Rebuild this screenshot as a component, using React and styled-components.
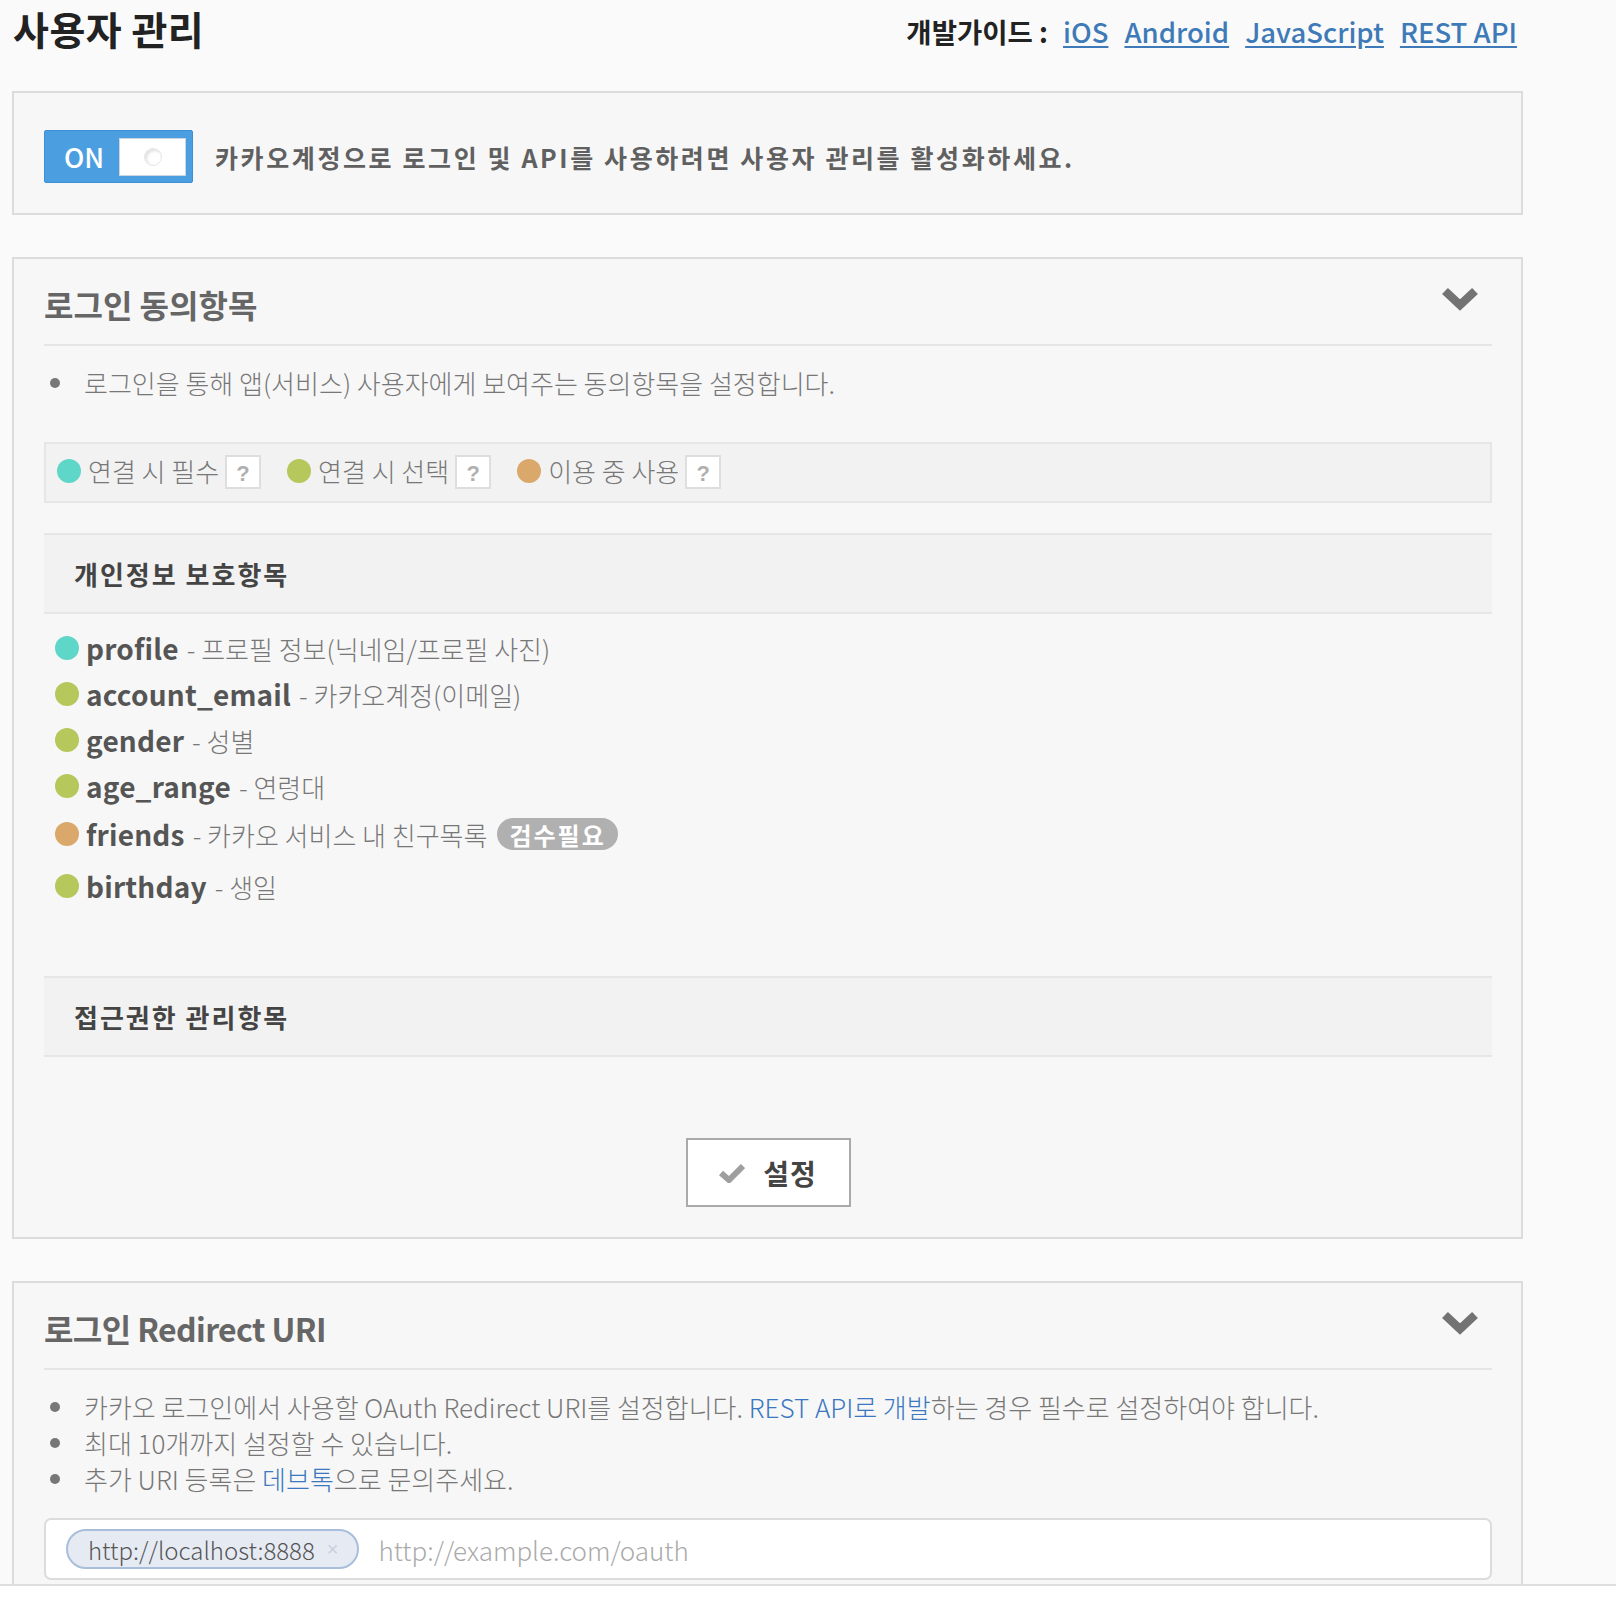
import React from 'react';
import styled, { createGlobalStyle } from 'styled-components';

const FONT = `"Noto Sans CJK KR", "Noto Sans", sans-serif`;

const GlobalStyle = createGlobalStyle`
  html, body { margin: 0; padding: 0; background: #fff; }
  body { font-family: ${FONT}; }
  * { box-sizing: border-box; }
`;

const Page = styled.div`
  height: 1586px;
  background: #fafafa;
  border-bottom: 2px solid #dedede;
  overflow: hidden;
  padding: 0 93px 0 12px;
`;

const Header = styled.header`
  display: flex;
  justify-content: space-between;
  align-items: flex-start;
  height: 91px;
  padding: 3px 6px 0 0;
`;

const Title = styled.h1`
  margin: 0;
  padding-left: 1px;
  font-size: 39px;
  font-weight: 700;
  line-height: 50px;
  color: #222;
  letter-spacing: 0.5px;
`;

const Guide = styled.div`
  margin-top: 7px;
  display: flex;
  align-items: baseline;
  gap: 16px;
  line-height: 42px;
`;

const GuideLabel = styled.span`
  font-size: 27.5px;
  font-weight: 700;
  color: #222;
  margin-right: -1px;
`;

const GuideLink = styled.a`
  font-size: 27.5px;
  font-weight: 500;
  color: #3f7ab8;
  text-decoration: underline;
  text-underline-offset: 3px;
`;

const Panel = styled.section`
  background: #f7f7f7;
  border: 2px solid #dcdcdc;
  margin-bottom: 42px;
  padding: ${(p) => p.$pad || '0 29px 30px 30px'};
  ${(p) => p.$flex && 'display: flex; align-items: center; gap: 22px;'}
`;

const Toggle = styled.div`
  width: 149px;
  height: 53px;
  flex: none;
  display: flex;
  align-items: center;
  justify-content: space-between;
  padding: 0 6px 0 19px;
  background: #4b9fe1;
  border: 1px solid #3f8fd6;
  border-radius: 2px;
`;

const ToggleLabel = styled.span`
  font-size: 27px;
  font-weight: 500;
  color: #fff;
  line-height: 1;
`;

const Knob = styled.div`
  width: 67px;
  height: 38px;
  background: #fff;
  border: 1px solid #c9d6e2;
  display: flex;
  align-items: center;
  justify-content: center;
`;

const KnobDot = styled.div`
  width: 18px;
  height: 18px;
  border-radius: 50%;
  border: 1px solid #e6e6e6;
  box-shadow: inset 2px 2px 3px rgba(0, 0, 0, 0.12);
`;

const ActivateText = styled.p`
  margin: 0;
  font-size: 25px;
  font-weight: 700;
  color: #606060;
  letter-spacing: 2.6px;
`;

const PanelHead = styled.div`
  display: flex;
  justify-content: space-between;
  align-items: center;
  padding: 25px 0 20px;
  border-bottom: 2px solid #e5e5e5;
`;

const PanelTitle = styled.h2`
  margin: 0;
  font-size: 32px;
  font-weight: 700;
  line-height: 40px;
  color: #666;
  letter-spacing: ${(p) => (p.$tight ? '-0.6px' : '0')};
`;

const Chevron = styled.svg`
  width: 36px;
  height: 26px;
  margin-right: 14px;
  margin-bottom: 13px;
`;

const Bullets = styled.ul`
  list-style: none;
  margin: 19px 0 0;
  padding: 0;
`;

const Bullet = styled.li`
  position: relative;
  padding-left: 40px;
  font-size: 26px;
  font-weight: 300;
  line-height: 36px;
  color: #777;
  &::before {
    content: '';
    position: absolute;
    left: 6px;
    top: 13px;
    width: 10px;
    height: 10px;
    border-radius: 50%;
    background: #777;
  }
`;

const InlineLink = styled.a`
  color: #3b78c0;
  text-decoration: none;
`;

const Legend = styled.div`
  margin-top: 41px;
  height: 61px;
  display: flex;
  align-items: center;
  padding: 0 0 4px 11px;
  background: #f2f2f2;
  border: 2px solid #e6e6e6;
`;

const LegendItem = styled.div`
  display: flex;
  align-items: center;
  margin-right: 26px;
`;

const Dot = styled.span`
  width: 24px;
  height: 24px;
  border-radius: 50%;
  flex: none;
  background: ${(p) => p.$color};
  margin-right: 7px;
`;

const LegendText = styled.span`
  font-size: 26px;
  font-weight: 300;
  color: #777;
`;

const HelpBox = styled.span`
  width: 36px;
  height: 34px;
  margin-left: 6px;
  margin-top: 3px;
  display: flex;
  align-items: center;
  justify-content: center;
  padding-top: 3px;
  background: #fff;
  border: 2px solid #dedede;
  font-family: "Liberation Sans", sans-serif;
  font-size: 22px;
  font-weight: 700;
  color: #b0b0b0;
`;

const SubHead = styled.div`
  margin-top: ${(p) => p.$top}px;
  height: 81px;
  display: flex;
  align-items: center;
  padding-left: 30px;
  background: #f2f2f2;
  border-top: 2px solid #e6e6e6;
  border-bottom: 2px solid #e6e6e6;
  font-size: 26px;
  font-weight: 700;
  color: #444;
  letter-spacing: 2px;
`;

const ScopeList = styled.ul`
  list-style: none;
  margin: 11px 0 0;
  padding: 0 0 0 11px;
`;

const Scope = styled.li`
  display: flex;
  align-items: center;
  min-height: 46px;
  padding: ${(p) => (p.$tall ? '5px 0 9px' : '0')};
`;

const ScopeKey = styled.span`
  font-size: 28px;
  font-weight: 700;
  color: #555;
  letter-spacing: 0.2px;
`;

const ScopeDesc = styled.span`
  font-size: 26px;
  font-weight: 300;
  color: #777;
  margin-left: 8px;
`;

const Badge = styled.span`
  margin-left: 10px;
  height: 32px;
  padding: 0 12px;
  display: inline-flex;
  align-items: center;
  border-radius: 16px;
  background: #b0b0b0;
  color: #fff;
  font-size: 24px;
  font-weight: 700;
  letter-spacing: 2px;
`;

const ButtonRow = styled.div`
  display: flex;
  justify-content: center;
  margin-top: 81px;
`;

const SaveButton = styled.button`
  width: 165px;
  height: 69px;
  display: flex;
  align-items: center;
  justify-content: center;
  gap: 18px;
  background: #fff;
  border: 2px solid #aaa;
  font-family: ${FONT};
  font-size: 28px;
  font-weight: 700;
  color: #444;
  letter-spacing: 1px;
  cursor: pointer;
`;

const UriBox = styled.div`
  margin-top: 21px;
  height: 62px;
  display: flex;
  align-items: center;
  gap: 17px;
  padding-left: 20px;
  background: #fff;
  border: 2px solid #dcdcdc;
  border-radius: 7px;
`;

const UriTag = styled.span`
  height: 40px;
  display: inline-flex;
  align-items: center;
  gap: 12px;
  padding: 0 19px 0 20px;
  background: #e6ebf3;
  border: 2px solid #a9bedb;
  border-radius: 20px;
  font-size: 24px;
  font-weight: 300;
  color: #555;
`;

const TagX = styled.span`
  font-family: "Liberation Sans", sans-serif;
  font-size: 20px;
  color: #c8d0dc;
`;

const UriInput = styled.input`
  flex: 1;
  border: none;
  outline: none;
  background: transparent;
  font-family: ${FONT};
  font-size: 26px;
  font-weight: 300;
  color: #555;
  &::placeholder { color: #aaa; }
`;

const ChevronIcon = () => (
  <Chevron viewBox="0 0 36 26">
    <path d="M3 6 L18 20 L33 6" fill="none" stroke="#737373" strokeWidth="8.5" strokeLinejoin="miter" />
  </Chevron>
);

const CheckIcon = () => (
  <svg width="26" height="20" viewBox="0 0 26 20">
    <path d="M2 10 L10 17 L24 3" fill="none" stroke="#9e9e9e" strokeWidth="6" />
  </svg>
);

const scopes = [
  { key: 'profile', desc: '프로필 정보(닉네임/프로필 사진)', color: '#5fd7c8' },
  { key: 'account_email', desc: '카카오계정(이메일)', color: '#b6c75b' },
  { key: 'gender', desc: '성별', color: '#b6c75b' },
  { key: 'age_range', desc: '연령대', color: '#b6c75b' },
  { key: 'friends', desc: '카카오 서비스 내 친구목록', color: '#dba86c', badge: '검수필요' },
  { key: 'birthday', desc: '생일', color: '#b6c75b' },
];

const legend = [
  { label: '연결 시 필수', color: '#5fd7c8' },
  { label: '연결 시 선택', color: '#b6c75b' },
  { label: '이용 중 사용', color: '#dba86c' },
];

export default function App() {
  return (
    <>
      <GlobalStyle />
      <Page>
        <Header>
          <Title>사용자 관리</Title>
          <Guide>
            <GuideLabel>개발가이드 :</GuideLabel>
            <GuideLink href="#">iOS</GuideLink>
            <GuideLink href="#">Android</GuideLink>
            <GuideLink href="#">JavaScript</GuideLink>
            <GuideLink href="#">REST API</GuideLink>
          </Guide>
        </Header>

        <Panel $flex $pad="37px 30px 30px">
          <Toggle>
            <ToggleLabel>ON</ToggleLabel>
            <Knob>
              <KnobDot />
            </Knob>
          </Toggle>
          <ActivateText>카카오계정으로 로그인 및 API를 사용하려면 사용자 관리를 활성화하세요.</ActivateText>
        </Panel>

        <Panel $pad="0 29px 30px 30px">
          <PanelHead>
            <PanelTitle>로그인 동의항목</PanelTitle>
            <ChevronIcon />
          </PanelHead>
          <Bullets>
            <Bullet>로그인을 통해 앱(서비스) 사용자에게 보여주는 동의항목을 설정합니다.</Bullet>
          </Bullets>
          <Legend>
            {legend.map((l) => (
              <LegendItem key={l.label}>
                <Dot $color={l.color} />
                <LegendText>{l.label}</LegendText>
                <HelpBox>?</HelpBox>
              </LegendItem>
            ))}
          </Legend>
          <SubHead $top={30}>개인정보 보호항목</SubHead>
          <ScopeList>
            {scopes.map((s) => (
              <Scope key={s.key} $tall={!!s.badge}>
                <Dot $color={s.color} />
                <ScopeKey>{s.key}</ScopeKey>
                <ScopeDesc>- {s.desc}</ScopeDesc>
                {s.badge && <Badge>{s.badge}</Badge>}
              </Scope>
            ))}
          </ScopeList>
          <SubHead $top={67}>접근권한 관리항목</SubHead>
          <ButtonRow>
            <SaveButton>
              <CheckIcon />
              설정
            </SaveButton>
          </ButtonRow>
        </Panel>

        <Panel>
          <PanelHead>
            <PanelTitle $tight>로그인 Redirect URI</PanelTitle>
            <ChevronIcon />
          </PanelHead>
          <Bullets>
            <Bullet>
              카카오 로그인에서 사용할 OAuth Redirect URI를 설정합니다. <InlineLink href="#">REST API로 개발</InlineLink>하는 경우 필수로 설정하여야 합니다.
            </Bullet>
            <Bullet>최대 10개까지 설정할 수 있습니다.</Bullet>
            <Bullet>
              추가 URI 등록은 <InlineLink href="#">데브톡</InlineLink>으로 문의주세요.
            </Bullet>
          </Bullets>
          <UriBox>
            <UriTag>
              http://localhost:8888
              <TagX>×</TagX>
            </UriTag>
            <UriInput placeholder="http://example.com/oauth" />
          </UriBox>
        </Panel>
      </Page>
    </>
  );
}
